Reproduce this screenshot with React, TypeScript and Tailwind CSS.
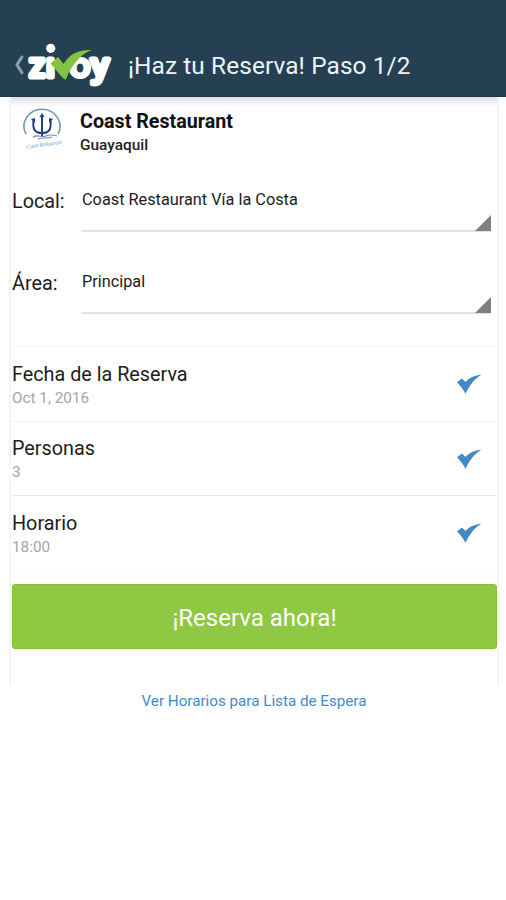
interface DetailRow {
  label: string;
  value: string;
  border: string;
}

const details: DetailRow[] = [
  { label: 'Fecha de la Reserva', value: 'Oct 1, 2016', border: 'border-[#f0f0f0]' },
  { label: 'Personas', value: '3', border: 'border-[#e9e9e9]' },
  { label: 'Horario', value: '18:00', border: 'border-[#fafafa]' },
];

export default function App() {
  return (
    <div className="h-[900px] w-[506px] overflow-hidden bg-white font-['Roboto',sans-serif] text-[#1c1c1c]">
      <header className="flex h-[97px] items-end border-b border-[#1b3446] bg-[#254053] pl-[14px]">
        <button className="flex h-[62px] items-center gap-[2px]" aria-label="Volver">
          <BackChevron />
          <ZivoyLogo />
        </button>
        <h1 className="ml-[17px] h-[45px] whitespace-nowrap text-[24.4px] leading-[30px] tracking-[0.1px] text-[#eef3f8]">
          ¡Haz tu Reserva! Paso 1/2
        </h1>
      </header>

      <main className="mr-[7px] ml-[9px] h-[589px] border-x-2 border-[#f5f5f5]">
        <div className="h-[10px] bg-linear-to-b from-[#dedede] to-white" />

        {/* Restaurant */}
        <div className="flex h-[64px] pl-[11px]">
          <RestaurantLogo />
          <div className="ml-[16px] pt-[3px]">
            <h2 className="text-[19.7px] leading-[24px] font-bold text-[#111]">Coast Restaurant</h2>
            <p className="text-[15.4px] leading-[22px] font-medium text-[#222]">Guayaquil</p>
          </div>
        </div>

        <SelectField label="Local:" value="Coast Restaurant Vía la Costa" />
        <SelectField label="Área:" value="Principal" />

        {/* Reservation details */}
        <div className="mt-[11px] mr-px ml-px border-t border-[#f8f8f8]">
          {details.map(d => (
            <div key={d.label} className={`flex h-[74.5px] items-center justify-between border-b pt-[2px] pr-[14px] ${d.border}`}>
              <div className="pt-[2px]">
                <p className="text-[19.8px] leading-[24px]">{d.label}</p>
                <p className="text-[15.3px] leading-[22px] text-[#a5a5a5]">{d.value}</p>
              </div>
              <CheckMark />
            </div>
          ))}
        </div>

        <button className="mt-[13px] ml-px block h-[65px] w-[485px] rounded-[3px] border border-[#84c02f] bg-[#8fc842] pt-[3px] text-[24px] text-white">
          ¡Reserva ahora!
        </button>
      </main>

      <p className="mt-[5px] pl-[2px] text-center text-[15.2px] leading-[20px] text-[#428bca]">
        Ver Horarios para Lista de Espera
      </p>
    </div>
  );
}

function SelectField({ label, value }: { label: string; value: string }) {
  return (
    <div className="flex h-[82px] pl-px">
      <span className="w-[69px] pt-[19px] text-[19.8px] leading-[24px]">{label}</span>
      <div className="flex h-[61px] w-[410px] items-end justify-between border-b-2 border-[#e2e2e2]">
        <span className="h-[40px] pl-px text-[16.3px] leading-[20px]">{value}</span>
        <svg width="16" height="16" viewBox="0 0 16 16" className="-mb-px">
          <path d="M16 0v16H0z" fill="#808080" />
        </svg>
      </div>
    </div>
  );
}

function CheckMark() {
  return (
    <svg width="25" height="21" viewBox="0 0 25 21">
      <path d="M0 8.200 5 4.500 8.500 8C12 4 17.500 1 24.500.7 17.500 4.500 12.500 11.500 8.600 19.700 6 15 3 11.500 0 8.200z" fill="#4189c7" />
    </svg>
  );
}

function BackChevron() {
  return (
    <svg width="11" height="20" viewBox="0 0 11 20" fill="none">
      <path d="M8.500 1 3 9.800l5.500 9" stroke="#8fa0ad" strokeWidth="3" />
    </svg>
  );
}

function ZivoyLogo() {
  return (
    <svg width="84" height="48" viewBox="0 0 84 48" className="overflow-visible">
      <g
        fill="#fff"
        stroke="#fff"
        strokeWidth="5"
        strokeLinejoin="round"
        fontFamily="Roboto, sans-serif"
        fontWeight="400"
        fontSize="34"
      >
        <text x="2" y="36" textLength="16" lengthAdjust="spacingAndGlyphs">z</text>
        <text x="19" y="36" textLength="9" lengthAdjust="spacingAndGlyphs">ı</text>
        <text x="42.500" y="35.500" textLength="21" lengthAdjust="spacingAndGlyphs" strokeWidth="4">o</text>
        <text x="64" y="35.500" textLength="18" lengthAdjust="spacingAndGlyphs">y</text>
      </g>
      <circle cx="23.700" cy="7.300" r="4.600" fill="#fff" />
      <path d="M23.500 22.500 31 16 36.500 23C42 14 50 8.500 65 9 53 13 45 24 38.500 39 34 36 28 27 23.500 22.500z" fill="#82c341" />
    </svg>
  );
}

function RestaurantLogo() {
  return (
    <svg width="42" height="44" viewBox="0 0 42 44" fill="none">
      <path d="M4 27A18 17 0 1 1 36 27" stroke="#7199b3" strokeWidth="1.600" />
      <path d="M20 8v22M11.500 13c-1 9 1 13 8.500 13s9.500-4 8.500-13" stroke="#243f85" strokeWidth="2" />
      <path d="m17.500 10 2.500-4 2.500 4zM9 12l4-1v5zM31 12l-4-1v5z" fill="#243f85" />
      <path d="M11 30c5-3 9 1 13-1s7-1 11 0M16 32c6-2 9 0 14-2" stroke="#6e8da3" strokeWidth="1.200" />
      <text x="4" y="39.500" transform="rotate(-8 20 38)" fill="#73a9d1" fontSize="6" fontStyle="italic" fontFamily="Liberation Serif, serif" textLength="36">
        Coast Restaurant
      </text>
    </svg>
  );
}
